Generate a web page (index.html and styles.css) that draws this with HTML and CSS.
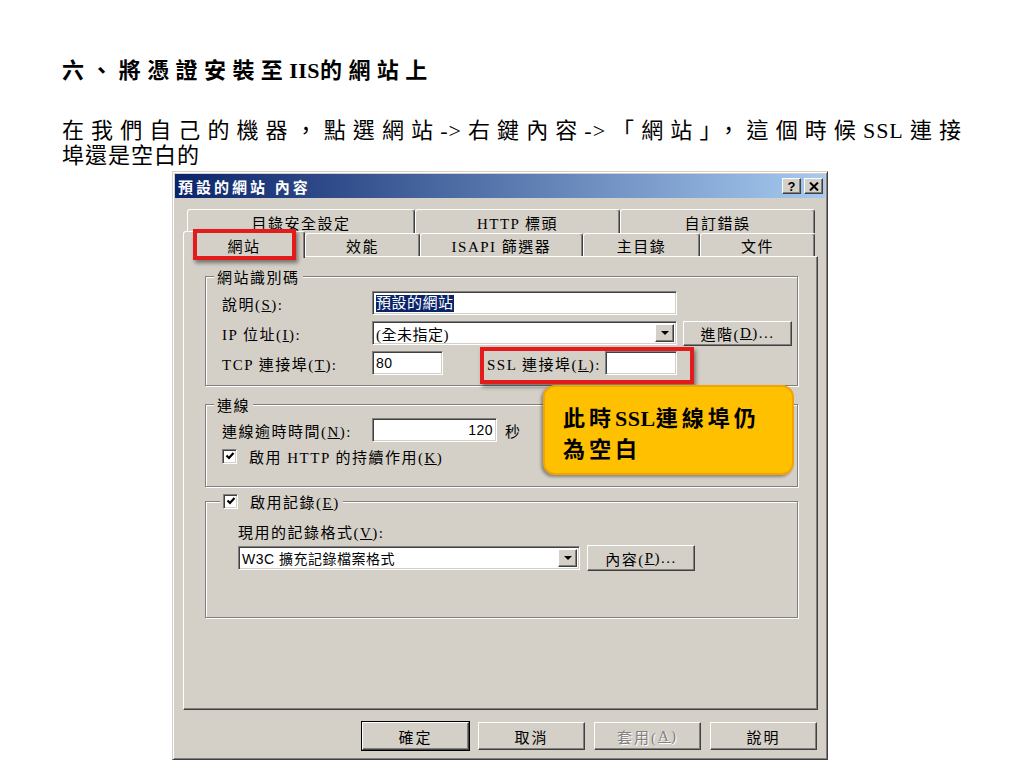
FILE: index.html
```html
<!DOCTYPE html>
<html lang="zh-Hant">
<head>
    <meta charset="UTF-8">
    <title>將憑證安裝至IIS的網站上</title>
    <link rel="stylesheet" href="styles.css">
</head>
<body>
    <div class="doc">
        <h1 class="doc-title">六、將憑證安裝至<span class="latin">IIS</span>的網站上</h1>
        <p class="doc-text"><span class="doc-line">在我們自己的機器，點選網站-&gt;右鍵內容-&gt;「網站」，這個時候SSL連接</span>埠還是空白的</p>

        <div class="dialog">
            <div class="titlebar">
                <span class="title">預設的網站 內容</span>
                <span class="caption-btns">
                    <span class="cap-btn cap-help">?</span>
                    <span class="cap-btn">
                        <svg width="10" height="9" viewBox="0 0 10 9"><path d="M1 0.5 L9 8.5 M9 0.5 L1 8.5" stroke="#000" stroke-width="2"/></svg>
                    </span>
                </span>
            </div>

            <div class="tabs">
                <div class="tab-row tab-row-back">
                    <div class="tab t-dirsec">目錄安全設定</div>
                    <div class="tab t-http">HTTP 標頭</div>
                    <div class="tab t-err">自訂錯誤</div>
                </div>
                <div class="tab-row tab-row-front">
                    <div class="tab tab-active t-site">網站</div>
                    <div class="tab t-perf">效能</div>
                    <div class="tab t-isapi">ISAPI 篩選器</div>
                    <div class="tab t-home">主目錄</div>
                    <div class="tab t-docs">文件</div>
                </div>
            </div>

            <div class="panel">
                <fieldset class="group group-id">
                    <legend>網站識別碼</legend>
                    <div class="row">
                        <span class="label">說明(<u>S</u>):</span>
                        <span class="field field-desc"><span class="selected">預設的網站</span></span>
                    </div>
                    <div class="row">
                        <span class="label">IP 位址(<u>I</u>):</span>
                        <span class="field combo combo-ip">(全未指定)<span class="drop"><span class="arrow"></span></span></span>
                        <span class="btn btn-adv">進階(<u>D</u>)...</span>
                    </div>
                    <div class="row">
                        <span class="label">TCP 連接埠(<u>T</u>):</span>
                        <span class="field field-port value">80</span>
                        <span class="label-ssl">SSL 連接埠(<u>L</u>):</span>
                        <span class="field field-ssl"></span>
                    </div>
                </fieldset>

                <fieldset class="group group-conn">
                    <legend>連線</legend>
                    <div class="row">
                        <span class="label">連線逾時時間(<u>N</u>):</span>
                        <span class="field field-timeout value">120</span>
                        <span class="unit">秒</span>
                    </div>
                    <div class="row row-check">
                        <span class="check"><svg width="10" height="10" viewBox="0 0 10 10"><path d="M1.5 4.5 L4 7 L8.5 2" fill="none" stroke="#000" stroke-width="2.2"/></svg></span>
                        <span class="check-text">啟用 HTTP 的持續作用(<u>K</u>)</span>
                    </div>
                </fieldset>

                <fieldset class="group group-log">
                    <legend>
                        <span class="check"><svg width="10" height="10" viewBox="0 0 10 10"><path d="M1.5 4.5 L4 7 L8.5 2" fill="none" stroke="#000" stroke-width="2.2"/></svg></span>
                        <span class="check-text">啟用記錄(<u>E</u>)</span>
                    </legend>
                    <div class="log-label">現用的記錄格式(<u>V</u>):</div>
                    <div class="row row-log">
                        <span class="field combo combo-log value">W3C 擴充記錄檔案格式<span class="drop"><span class="arrow"></span></span></span>
                        <span class="btn btn-props">內容(<u>P</u>)...</span>
                    </div>
                </fieldset>
            </div>

            <div class="dialog-buttons">
                <span class="btn btn-default">確定</span>
                <span class="btn">取消</span>
                <span class="btn btn-disabled">套用(<u>A</u>)</span>
                <span class="btn">說明</span>
            </div>

            <!-- annotation marks drawn over the screenshot -->
            <div class="mark mark-tab"></div>
            <div class="mark mark-ssl"></div>
            <div class="callout">此時<span class="latin">SSL</span>連線埠仍<br>為空白</div>
        </div>
    </div>
</body>
</html>
```

FILE: styles.css
```css
body {
    margin: 0;
    background-color: #ffffff;
    color: #000;
    font-family: "Liberation Serif", "Noto Sans CJK TC", serif;
}
.doc {
    padding: 59px 0 0 62px;
}
.doc-title {
    margin: 0;
    font-size: 22px;
    line-height: 24px;
    font-weight: bold;
    letter-spacing: 6.4px;
}
.latin {
    letter-spacing: 0.5px;
}
.doc-text {
    width: 900px;
    margin: 35px 0 0;
    font-size: 22px;
    line-height: 25px;
    letter-spacing: 1px;
    text-align: justify;
}
/* first line is justified like the source document */
.doc-line {
    display: block;
    text-align-last: justify;
}

/* Windows classic dialog */
.dialog {
    position: relative;
    box-sizing: border-box;
    width: 656px;
    margin: 3px 0 0 110px;
    padding: 2px 2px 9px;
    background-color: #d4d0c8;
    border: 1px solid;
    border-color: #d4d0c8 #404040 #404040 #d4d0c8;
    box-shadow: inset 1px 1px 0 #fff, inset -1px -1px 0 #808080;
    font-size: 15px;
    letter-spacing: 1.5px;
}
.titlebar {
    display: flex;
    align-items: center;
    justify-content: space-between;
    height: 24px;
    padding: 0 2px 0 3px;
    background: linear-gradient(to right, #0a246a, #a6caf0);
}
.title {
    color: #fff;
    font-weight: bold;
    font-size: 15px;
    letter-spacing: 3px;
}
.caption-btns {
    display: flex;
    gap: 3px;
}
.cap-btn {
    display: flex;
    align-items: center;
    justify-content: center;
    box-sizing: border-box;
    width: 19px;
    height: 16px;
    background-color: #d4d0c8;
    border: 1px solid;
    border-color: #fff #404040 #404040 #fff;
    box-shadow: inset -1px -1px 0 #808080;
}
.cap-help {
    font-family: "Liberation Sans", sans-serif;
    font-weight: bold;
    font-size: 13px;
    letter-spacing: 0;
}

/* tabs */
.tabs {
    margin: 11px 0 0 8px;
}
.tab-row {
    display: flex;
}
.tab-row-back {
    height: 24px;
    margin-left: 4px;
}
.tab-row-front {
    height: 23px;
    margin-left: 2px;
    align-items: flex-end;
}
.tab {
    box-sizing: border-box;
    height: 100%;
    display: flex;
    align-items: center;
    justify-content: center;
    border-top: 1px solid #fff;
    border-left: 1px solid #fff;
    border-right: 1px solid #404040;
    border-radius: 3px 3px 0 0;
    box-shadow: inset -1px 0 0 #808080;
}
.tab-row-back .tab {
    padding-top: 1px;
}
.t-dirsec { width: 228px; }
.t-http { width: 205px; }
.t-err { width: 195px; }
.t-site { width: 122px; }
.t-perf { width: 115px; }
.t-isapi { width: 163px; }
.t-home { width: 117px; }
.t-docs { width: 115px; }
.tab-active {
    position: relative;
    z-index: 1;
    height: 27px;
    margin: 0 0 -2px -2px;
    background-color: #d4d0c8;
}

.panel {
    box-sizing: border-box;
    height: 454px;
    margin: 0 7px 0 8px;
    padding: 0 19px 0 21px;
    border: 1px solid;
    border-color: #fff #404040 #404040 #fff;
    box-shadow: inset -1px -1px 0 #808080;
}

/* group boxes */
.group {
    margin: 0;
    padding: 0;
    min-inline-size: 0;
    border: 1px solid #808080;
    box-shadow: inset 1px 1px 0 #fff, 1px 1px 0 #fff;
}
.group legend {
    display: flex;
    align-items: center;
    height: 18px;
    margin-left: -8px;
    padding: 0 3px;
    background-color: #d4d0c8;
}
.group-id {
    margin-top: 10px;
    padding: 6px 0 10px 16px;
}
.group-conn {
    margin-top: 9px;
    padding: 5px 0 20px 16px;
}
.group-log {
    margin-top: 5px;
    padding: 14px 0 46px 32px;
}
.group-log legend {
    margin-left: -18px;
}
.row {
    display: flex;
    align-items: center;
    height: 24px;
}
.row + .row {
    margin-top: 6px;
}
.label {
    width: 150px;
}
.field {
    box-sizing: border-box;
    height: 24px;
    display: flex;
    align-items: center;
    padding: 0 3px;
    background-color: #fff;
    border: 1px solid;
    border-color: #808080 #fff #fff #808080;
    box-shadow: inset 1px 1px 0 #404040, inset -1px -1px 0 #d4d0c8;
    letter-spacing: 0.5px;
}
.value {
    font-family: "Liberation Sans", "Noto Sans CJK TC", sans-serif;
    font-size: 14px;
}
.field-desc {
    width: 305px;
}
.selected {
    background-color: #0a246a;
    color: #fff;
    line-height: 17px;
}
.combo {
    position: relative;
    padding-right: 24px;
}
.combo-ip {
    width: 305px;
}
.drop {
    position: absolute;
    top: 2px;
    right: 2px;
    bottom: 2px;
    width: 19px;
    box-sizing: border-box;
    display: flex;
    align-items: center;
    justify-content: center;
    background-color: #d4d0c8;
    border: 1px solid;
    border-color: #fff #404040 #404040 #fff;
    box-shadow: inset -1px -1px 0 #808080;
}
.arrow {
    width: 0;
    height: 0;
    border-left: 4px solid transparent;
    border-right: 4px solid transparent;
    border-top: 4px solid #000;
}
.btn {
    box-sizing: border-box;
    display: flex;
    align-items: center;
    justify-content: center;
    background-color: #d4d0c8;
    border: 1px solid;
    border-color: #fff #404040 #404040 #fff;
    box-shadow: inset -1px -1px 0 #808080;
}
.btn-adv {
    width: 109px;
    height: 25px;
    margin-left: 6px;
}
.field-port {
    width: 71px;
}
.label-ssl {
    width: 118px;
    margin-left: 44px;
}
.field-ssl {
    width: 72px;
}
.field-timeout {
    width: 125px;
    justify-content: flex-end;
}
.unit {
    margin-left: 8px;
}
.row-check {
    height: 20px;
    margin-top: 4px !important;
}
.check {
    box-sizing: border-box;
    width: 15px;
    height: 15px;
    display: flex;
    align-items: center;
    justify-content: center;
    background-color: #fff;
    border: 1px solid;
    border-color: #808080 #fff #fff #808080;
    box-shadow: inset 1px 1px 0 #404040, inset -1px -1px 0 #d4d0c8;
}
.check-text {
    margin-left: 12px;
}
.log-label {
    height: 18px;
    line-height: 18px;
}
.row-log {
    height: 26px;
    margin-top: 3px;
}
.combo-log {
    width: 342px;
}
.btn-props {
    width: 108px;
    height: 26px;
    margin-left: 7px;
}

/* bottom buttons */
.dialog-buttons {
    display: flex;
    justify-content: flex-end;
    gap: 9px;
    margin: 12px 8px 0 0;
}
.dialog-buttons .btn {
    width: 107px;
    height: 28px;
    letter-spacing: 2px;
}
.btn-default {
    outline: 1px solid #000;
    outline-offset: 0;
}
.btn-disabled {
    color: #808080;
    text-shadow: 1px 1px 0 #fff;
}

/* annotations */
.mark {
    position: absolute;
    z-index: 2;
    box-sizing: border-box;
    border: 4px solid #e31b1b;
    box-shadow: 2px 3px 4px rgba(0, 0, 0, 0.45);
}
.mark-tab {
    left: 20px;
    top: 57px;
    width: 103px;
    height: 31px;
}
.mark-ssl {
    left: 307px;
    top: 175px;
    width: 214px;
    height: 37px;
}
.callout {
    position: absolute;
    z-index: 2;
    left: 370px;
    top: 213px;
    box-sizing: border-box;
    width: 251px;
    height: 90px;
    padding: 16px 0 0 18px;
    background-color: #ffc000;
    border: 2px solid #f5a300;
    border-radius: 12px;
    box-shadow: -2px 2px 3px rgba(0, 0, 0, 0.35);
    font-size: 22px;
    line-height: 31px;
    font-weight: bold;
    letter-spacing: 4px;
}
.callout .latin {
    letter-spacing: 0.5px;
}
```
